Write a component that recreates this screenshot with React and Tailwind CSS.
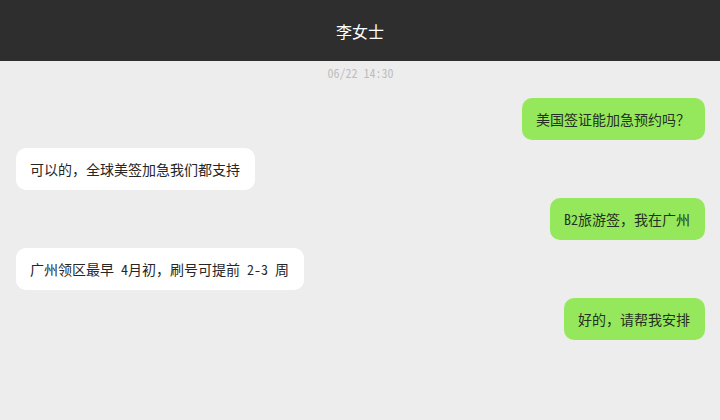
import React from 'react';

const messages = [
  { id: 1, from: 'me', text: '美国签证能加急预约吗？' },
  { id: 2, from: 'them', text: '可以的，全球美签加急我们都支持' },
  { id: 3, from: 'me', text: 'B2旅游签，我在广州' },
  { id: 4, from: 'them', text: '广州领区最早 4月初，刷号可提前 2-3 周' },
  { id: 5, from: 'me', text: '好的，请帮我安排' },
];

const font = {
  fontFamily: '"Noto Sans Mono CJK SC", "Noto Sans CJK SC", "DejaVu Sans Mono", monospace',
};

function Bubble({ from, text }) {
  const mine = from === 'me';
  return (
    <div className={`flex ${mine ? 'justify-end' : 'justify-start'}`}>
      <div
        className={`h-[42px] flex items-center pl-[14px] pr-[15px] rounded-[10px] text-[14px] leading-5 whitespace-nowrap ${
          mine ? 'bg-[#95e85b] text-[#263022]' : 'bg-white text-[#262626]'
        }`}
      >
        {text}
      </div>
    </div>
  );
}

export default function App() {
  return (
    <div className="w-[720px] h-[420px] bg-[#ededed] flex flex-col overflow-hidden" style={font}>
      {/* Header */}
      <div className="h-[61px] bg-[#2e2e2e] flex items-center justify-center shrink-0">
        <span className="text-white text-[16px]">李女士</span>
      </div>

      {/* Chat */}
      <div className="flex flex-col pl-4 pr-[15px] pt-[2px]">
        <div className="text-center text-[12px] leading-5 text-[#bdbdbd]">06/22 14:30</div>
        <div className="flex flex-col gap-2 mt-[15px]">
          {messages.map((m) => (
            <Bubble key={m.id} from={m.from} text={m.text} />
          ))}
        </div>
      </div>
    </div>
  );
}
